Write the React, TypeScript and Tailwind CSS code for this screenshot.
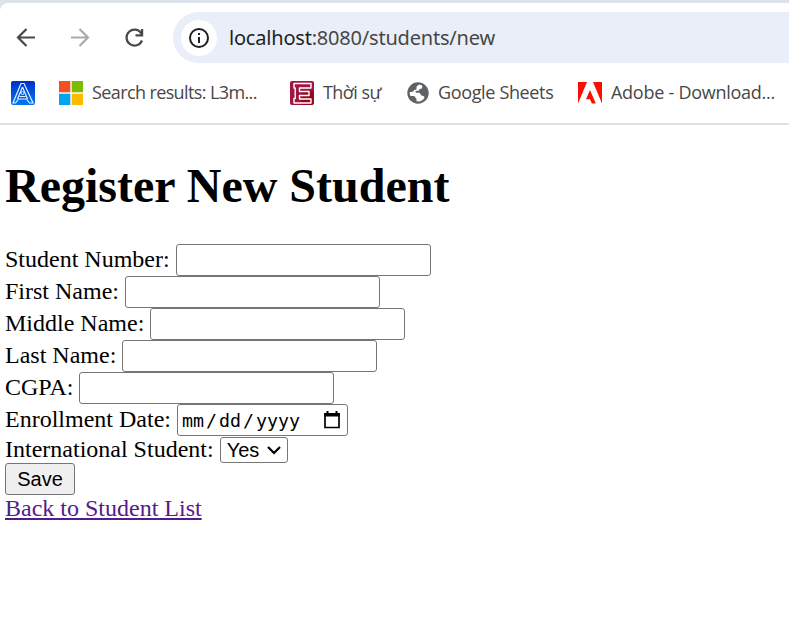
import type { ReactNode } from "react";

function Field({ label, children }: { label: string; children?: ReactNode }) {
  return (
    <div className="flex h-8 items-start">
      <label className="mr-1.5 whitespace-nowrap leading-[31px]">{label}</label>
      {children ?? <input className="h-8 w-[255px] rounded-[3px] border border-[#767676] bg-white px-1 text-xl outline-none" />}
    </div>
  );
}

function Bookmark({ icon, text, className }: { icon: ReactNode; text: string; className: string }) {
  return (
    <div className={`flex shrink-0 items-center ${className}`}>
      {icon}
      <span className="ml-[9px] whitespace-nowrap pb-px">{text}</span>
    </div>
  );
}

function BlueA() {
  return (
    <svg className="size-6 shrink-0" viewBox="0 0 24 24" fill="none">
      <defs>
        <linearGradient id="blue" x1="0" y1="0" x2="0" y2="1">
          <stop stopColor="#0030ca" />
          <stop offset="1" stopColor="#0078f3" />
        </linearGradient>
      </defs>
      <rect width="24" height="24" rx="2" fill="url(#blue)" />
      <path d="M10 2.5h3l9 19.5h-3.5l-3-4h-8l-3 4H2L10 2.5Zm1.5 3.5L6.5 18M11.5 6l5 12M8.5 15.5h6" stroke="#dff2ff" strokeWidth="1.2" />
      <circle cx="11.5" cy="12" r="1.5" stroke="#dff2ff" />
    </svg>
  );
}

function Squares() {
  return (
    <svg className="size-6 shrink-0" viewBox="0 0 24 24">
      <path fill="#f25022" d="M0 0h11.3v11.3H0z" />
      <path fill="#7fba00" d="M12.7 0H24v11.3H12.7z" />
      <path fill="#00a4ef" d="M0 12.7h11.3V24H0z" />
      <path fill="#ffb900" d="M12.7 12.7H24V24H12.7z" />
    </svg>
  );
}

function RedE() {
  return (
    <svg className="size-6 shrink-0" viewBox="0 0 24 24">
      <rect width="24" height="24" rx="2" fill="#9f1640" />
      <path fill="#94091c" d="M12 10h12v12l-2 2H12z" />
      <path d="M4 2.5h17V7H9.5v3.5H19v4H9.5V18H21v4H4v-4.5h1.2V7H4V2.5Z" fill="none" stroke="#fff" strokeWidth="1.4" strokeLinejoin="round" />
    </svg>
  );
}

function Globe() {
  return (
    <svg className="size-[22px] shrink-0" viewBox="0 0 22 22">
      <circle cx="11" cy="11" r="10.7" fill="#5f6368" />
      <path d="M12.3 2.5c-1.2 1-2.8 1.2-2.8 3v1.2c0 1.4-2.3.6-2.8 2-.4 1.1-1.6 1.2-4 1.3a8.3 8.3 0 0 0 .7 4h3.1c1.8 0 1.7 2.3 3 2.7v2.6c3.8.6 6.3-.8 7.7-3.1.7-1.5-.4-2.5-1.9-2.5-1.8 0-1.6-2.8-3.5-2.9H9.5c-1.3 0-1.4-2 .1-2h1.6c1.4 0 .8-2 2.4-2 1.3 0 2-1.2 1.5-3.4l-2.8-.9Z" fill="white" />
    </svg>
  );
}

function Adobe() {
  return (
    <svg className="h-[22px] w-6 shrink-0" viewBox="0 0 24 22" fill="#fa0f00">
      <path d="M0 0h9L0 21.5V0Zm15 0h9v21.5L15 0Zm-3 8 5.8 13.5h-4l-1.8-4.3H8L12 8Z" />
    </svg>
  );
}

export default function App() {
  return (
    <div className="h-[628px] w-[789px] overflow-hidden bg-white">
      <header className="h-[125px] border-b-2 border-[#e0e0e0] bg-[#dee3e9] pt-[3px] font-['Noto_Sans',sans-serif]">
        <div className="h-[120px] rounded-tl-lg bg-white pt-[9px]">
          <div className="flex h-[51px] items-center">
            <svg className="h-[51px] w-[173px] shrink-0" viewBox="0 0 173 51" fill="none" strokeWidth="2.2">
              <path d="M35 25.5H18.5M26.5 17 18 25.5l8.5 8.5" stroke="#47484a" />
              <path d="M71 25.5h16.5M79.5 17l8.5 8.5-8.5 8.5" stroke="#aaaaab" />
              <path d="M141.5 21.6A8 8 0 1 0 142 28.5" stroke="#47484a" strokeWidth="2.2" />
              <path d="M143.2 17v7.5h-7.7v-2.2h5.5V17Z" fill="#47484a" />
            </svg>
            <div className="flex h-[51px] flex-1 items-center rounded-l-full bg-[#e9eef8] pl-2">
              <svg className="size-9 shrink-0" viewBox="0 0 36 36" fill="none">
                <circle cx="18" cy="18" r="18" fill="white" />
                <circle cx="18" cy="18" r="9" stroke="#1f1f1f" strokeWidth="2" />
                <path d="M18 17v6M18 13v2" stroke="#1f1f1f" strokeWidth="2" />
              </svg>
              <span className="ml-3 whitespace-nowrap text-[20px] tracking-[-0.2px] text-[#474747]"><span className="text-[#1f1f1f]">localhost</span>:8080/students/new</span>
            </div>
          </div>
          <div className="flex h-[60px] items-center pl-[11px] font-['Open_Sans',sans-serif] text-[18px] text-[#474747]">
            <BlueA />
            <Bookmark className="ml-6 w-[231px] tracking-[-0.61px]" icon={<Squares />} text="Search results: L3m..." />
            <Bookmark className="w-[117px] tracking-[-0.55px]" icon={<RedE />} text="Thời sự" />
            <Bookmark className="w-[171px] tracking-[-0.35px]" icon={<Globe />} text="Google Sheets" />
            <Bookmark className="tracking-[-0.26px]" icon={<Adobe />} text="Adobe - Download..." />
          </div>
        </div>
      </header>
      <main className="pl-[5px] pt-[33px] font-['Liberation_Serif',serif] text-[24px] text-black">
        <h1 className="mb-[31px] text-[48px] font-bold leading-[55px]">Register New Student</h1>
        <form onSubmit={(event) => event.preventDefault()}>
          <Field label="Student Number:" />
          <Field label="First Name:" />
          <Field label="Middle Name:" />
          <Field label="Last Name:" />
          <Field label="CGPA:" />
          <Field label="Enrollment Date:">
            <div className="flex h-8 w-[171px] items-center justify-between rounded-[3px] border border-[#767676] pl-1 pr-1.5 font-['DejaVu_Sans_Mono',monospace] text-[18.3px]">
              <span className="flex gap-0.5 pt-0.5"><span>mm</span><span>/</span><span>dd</span><span>/</span><span>yyyy</span></span>
              <svg className="h-5 w-[18px]" viewBox="0 0 18 20">
                <path d="M2 4h14v13.5H2z" fill="none" stroke="black" strokeWidth="1.7" />
                <path d="M1.1 3h15.8v3.6H1.1zM3.5 1h2v3h-2zM12.5 1h2v3h-2z" />
              </svg>
            </div>
          </Field>
          <div className="flex h-[27px] items-start pt-px">
            <label className="mr-1.5 whitespace-nowrap leading-[25px]">International Student:</label>
            <div className="flex h-[26px] w-[68px] items-center rounded-[3px] border border-[#767676] pl-1.5 font-['Liberation_Sans',sans-serif] text-[20px]">
              Yes
              <svg className="ml-2 h-4 w-3.5" viewBox="0 0 14 16" fill="none"><path d="m1 5 6 6 6-6" stroke="black" strokeWidth="2.2" /></svg>
            </div>
          </div>
          <button className="block h-8 w-[70px] rounded-[3px] border border-[#767676] bg-[#efefef] text-center font-['Liberation_Sans',sans-serif] text-[20px] leading-[30px]">Save</button>
        </form>
        <a href="#" className="block w-fit text-[#551a8b] underline decoration-2 underline-offset-2 leading-[27px]">Back to Student List</a>
      </main>
    </div>
  );
}
